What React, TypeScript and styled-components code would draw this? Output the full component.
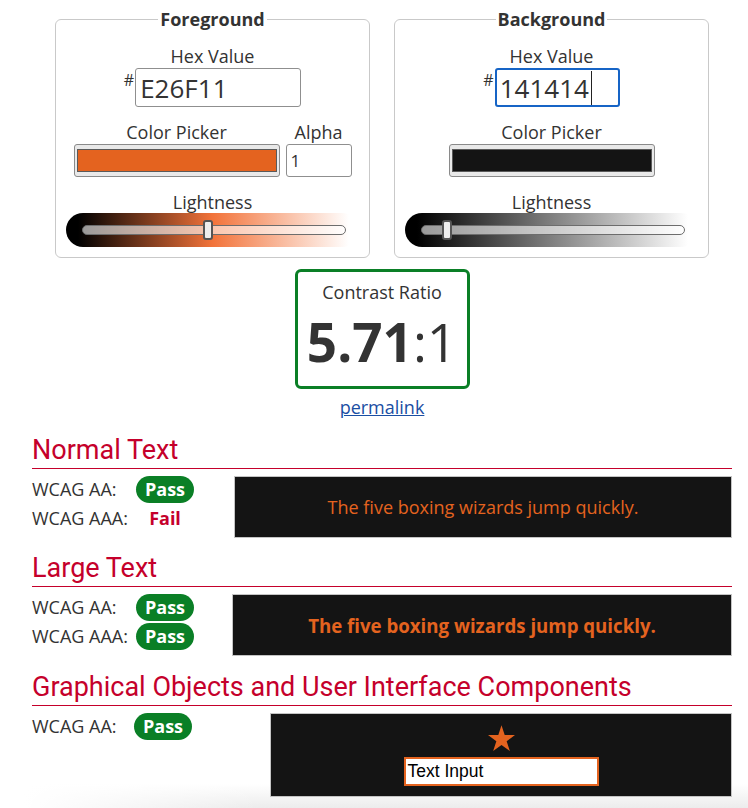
import React from "react";
import styled, { createGlobalStyle, css } from "styled-components";

const FG = "#e4631f";
const BG = "#141414";
const RED = "#c5002b";
const GREEN = "#0a7f26";

const GlobalStyle = createGlobalStyle`
  html, body { margin: 0; padding: 0; background: #fff; }
  body {
    font-family: "Open Sans", "DejaVu Sans", sans-serif;
    color: #333;
  }
  * { box-sizing: border-box; }
`;

const Page = styled.div`
  min-height: 808px;
  padding: 0 16px 0 32px;
  overflow: hidden;
  background:
    linear-gradient(to right, #fff 24px, rgba(255, 255, 255, 0) 260px),
    linear-gradient(to bottom, #fff 784px, #ececec 808px);
`;

const Content = styled.main`
  width: 700px;
`;

const Pickers = styled.div`
  display: flex;
  justify-content: center;
  gap: 24px;
  padding-top: 7px;
`;

const Panel = styled.fieldset`
  width: 315px;
  min-width: 0;
  margin: 0;
  padding: 13px 0 10px;
  border: 1px solid #c9c9c9;
  border-radius: 6px;
  display: flex;
  flex-direction: column;
  align-items: center;
`;

const Legend = styled.legend`
  margin: 0 auto;
  padding: 0 2px;
  font-size: 18px;
  line-height: 24px;
  font-weight: 700;
  color: #333;
`;

const FieldLabel = styled.div<{ $h?: number }>`
  font-size: 18px;
  line-height: ${(p) => p.$h ?? 24}px;
  text-align: center;
  color: #333;
`;

const HexRow = styled.div`
  display: flex;
  align-items: flex-start;
`;

const Hash = styled.span`
  font-size: 16px;
  line-height: 16px;
  margin-top: 4px;
  margin-right: 1px;
`;

const HexBox = styled.div<{ $w: number; $focused?: boolean }>`
  width: ${(p) => p.$w}px;
  height: 39px;
  display: flex;
  align-items: center;
  padding: 0 4px;
  font-size: 26px;
  color: #333;
  border-radius: 3px;
  ${(p) =>
    p.$focused
      ? css`
          border: 2px solid #1664c6;
          padding: 0 3px;
        `
      : css`
          border: 1px solid #8f8f8f;
        `}
`;

const Caret = styled.span`
  display: inline-block;
  width: 1px;
  height: 34px;
  margin-left: 2px;
  background: #222;
`;

const PickerRow = styled.div`
  display: flex;
  gap: 6px;
  margin-top: 13px;
`;

const PickerCol = styled.div`
  display: flex;
  flex-direction: column;
  align-items: center;
`;

const Swatch = styled.div`
  width: 206px;
  height: 33px;
  padding: 4px 2px;
  border: 1px solid #8a8a8a;
  border-radius: 3px;
  background: #e9e9e9;
`;

const SwatchFill = styled.div<{ $color: string }>`
  height: 100%;
  background: ${(p) => p.$color};
  border: 1px solid #5a5a5a;
`;

const AlphaBox = styled.div`
  width: 66px;
  height: 33px;
  display: flex;
  align-items: center;
  padding: 0 4px;
  font-size: 17px;
  color: #333;
  border: 1px solid #8f8f8f;
  border-radius: 3px;
`;

const LightnessBlock = styled.div`
  margin-top: 13px;
  display: flex;
  flex-direction: column;
  align-items: center;
`;

const SliderLabel = styled(FieldLabel)`
  padding-top: 1px;
`;

const SliderWell = styled.div<{ $mid: string }>`
  width: 293px;
  height: 34px;
  border-radius: 17px;
  display: flex;
  align-items: center;
  padding: 0 13px 0 16px;
  background: linear-gradient(
    to right,
    #000 12px,
    ${(p) => p.$mid} 50%,
    #fff calc(100% - 10px)
  );
`;

const Track = styled.div`
  position: relative;
  flex: 1;
  height: 10px;
  border-radius: 5px;
  border: 1px solid #6d6d6d;
  background: rgba(255, 255, 255, 0.6);
`;

const Thumb = styled.div`
  position: absolute;
  top: 50%;
  width: 10px;
  height: 20px;
  transform: translateY(-50%);
  background: #eee;
  border: 2px solid #555;
  border-radius: 3px;
`;

const Center = styled.div`
  display: flex;
  flex-direction: column;
  align-items: center;
`;

const RatioBox = styled.div`
  margin-top: 11px;
  width: 175px;
  height: 120px;
  border: 3px solid ${GREEN};
  border-radius: 6px;
  padding-top: 8px;
  text-align: center;
`;

const RatioLabel = styled.div`
  font-size: 18px;
  line-height: 24px;
  color: #333;
`;

const RatioValue = styled.div`
  margin-top: 11px;
  font-size: 53px;
  line-height: 53px;
  color: #333;
  white-space: nowrap;
  strong {
    font-weight: 700;
  }
`;

const Permalink = styled.a`
  margin-top: 6px;
  font-size: 18px;
  line-height: 24px;
  color: #1a4ea3;
  text-decoration: underline;
`;

const Section = styled.section<{ $top: number }>`
  margin-top: ${(p) => p.$top}px;
`;

const Heading = styled.h2`
  margin: 0;
  padding-bottom: 4px;
  font-family: Roboto, "Liberation Sans", sans-serif;
  font-weight: 400;
  font-size: 27px;
  line-height: 28px;
  color: ${RED};
  border-bottom: 1px solid ${RED};
`;

const Results = styled.div<{ $gap: number }>`
  display: flex;
  align-items: flex-start;
  gap: ${(p) => p.$gap}px;
  margin-top: 7px;
`;

const Checks = styled.div<{ $labelW: number }>`
  display: grid;
  grid-template-columns: ${(p) => p.$labelW}px 58px;
  row-gap: 2px;
`;

const CheckLabel = styled.div`
  font-size: 18px;
  line-height: 27px;
  color: #333;
  white-space: nowrap;
`;

const PassBadge = styled.div`
  height: 27px;
  border-radius: 14px;
  background: ${GREEN};
  color: #fff;
  font-weight: 700;
  font-size: 18px;
  line-height: 27px;
  text-align: center;
`;

const FailText = styled.div`
  color: ${RED};
  font-weight: 700;
  font-size: 18px;
  line-height: 27px;
  text-align: center;
`;

const Sample = styled.div<{ $large?: boolean }>`
  flex: 1;
  height: 62px;
  display: flex;
  align-items: center;
  justify-content: center;
  background: ${BG};
  border: 1px solid #c4c4c4;
  color: ${FG};
  font-size: ${(p) => (p.$large ? "18.66px" : "18px")};
  font-weight: ${(p) => (p.$large ? 700 : 400)};
`;

const GraphicSample = styled.div`
  flex: 1;
  height: 84px;
  display: flex;
  flex-direction: column;
  align-items: center;
  padding-top: 11px;
  gap: 5px;
  background: ${BG};
  border: 1px solid #c4c4c4;
`;

const FakeTextInput = styled.div`
  width: 195px;
  height: 29px;
  display: flex;
  align-items: center;
  padding: 0 2px;
  background: #fff;
  border: 2px solid ${FG};
  font-family: "Liberation Sans", Arial, sans-serif;
  font-size: 17.5px;
  color: #000;
`;

const Star = () => (
  <svg width="27" height="27" viewBox="0 0 27 27" aria-hidden="true">
    <polygon
      fill={FG}
      points="13.5,0.3 16.69,10.12 27,10.11 18.65,16.17 21.85,25.99 13.5,19.92 5.15,25.99 8.35,16.17 0,10.11 10.31,10.12"
    />
  </svg>
);

type SliderProps = { mid: string; pct: number };
const Lightness = ({ mid, pct }: SliderProps) => (
  <LightnessBlock>
    <SliderLabel $h={22}>Lightness</SliderLabel>
    <SliderWell $mid={mid}>
      <Track>
        <Thumb style={{ left: `calc(${pct} * (100% - 10px))` }} />
      </Track>
    </SliderWell>
  </LightnessBlock>
);

type Check = { label: string; pass: boolean };
const CheckList = ({ items, labelW }: { items: Check[]; labelW: number }) => (
  <Checks $labelW={labelW}>
    {items.map((c) => (
      <React.Fragment key={c.label}>
        <CheckLabel>{c.label}</CheckLabel>
        {c.pass ? <PassBadge>Pass</PassBadge> : <FailText>Fail</FailText>}
      </React.Fragment>
    ))}
  </Checks>
);

export default function App() {
  const sentence = "The five boxing wizards jump quickly.";
  return (
    <>
      <GlobalStyle />
      <Page>
        <Content>
          <Pickers>
            <Panel>
              <Legend>Foreground</Legend>
              <FieldLabel>Hex Value</FieldLabel>
              <HexRow>
                <Hash>#</Hash>
                <HexBox $w={166}>E26F11</HexBox>
              </HexRow>
              <PickerRow>
                <PickerCol>
                  <FieldLabel>Color Picker</FieldLabel>
                  <Swatch>
                    <SwatchFill $color={FG} />
                  </Swatch>
                </PickerCol>
                <PickerCol>
                  <FieldLabel>Alpha</FieldLabel>
                  <AlphaBox>1</AlphaBox>
                </PickerCol>
              </PickerRow>
              <Lightness mid="#f2733a" pct={0.476} />
            </Panel>
            <Panel>
              <Legend>Background</Legend>
              <FieldLabel>Hex Value</FieldLabel>
              <HexRow>
                <Hash>#</Hash>
                <HexBox $w={125} $focused>
                  141414
                  <Caret />
                </HexBox>
              </HexRow>
              <PickerRow>
                <PickerCol>
                  <FieldLabel>Color Picker</FieldLabel>
                  <Swatch>
                    <SwatchFill $color={BG} />
                  </Swatch>
                </PickerCol>
              </PickerRow>
              <Lightness mid="hsl(0, 0%, 50%)" pct={0.078} />
            </Panel>
          </Pickers>

          <Center>
            <RatioBox>
              <RatioLabel>Contrast Ratio</RatioLabel>
              <RatioValue>
                <strong>5.71</strong>:1
              </RatioValue>
            </RatioBox>
            <Permalink href="#">permalink</Permalink>
          </Center>

          <Section $top={17}>
            <Heading>Normal Text</Heading>
            <Results $gap={40}>
              <CheckList
                labelW={104}
                items={[
                  { label: "WCAG AA:", pass: true },
                  { label: "WCAG AAA:", pass: false },
                ]}
              />
              <Sample>{sentence}</Sample>
            </Results>
          </Section>

          <Section $top={16}>
            <Heading>Large Text</Heading>
            <Results $gap={38}>
              <CheckList
                labelW={104}
                items={[
                  { label: "WCAG AA:", pass: true },
                  { label: "WCAG AAA:", pass: true },
                ]}
              />
              <Sample $large>{sentence}</Sample>
            </Results>
          </Section>

          <Section $top={17}>
            <Heading>Graphical Objects and User Interface Components</Heading>
            <Results $gap={78}>
              <CheckList labelW={102} items={[{ label: "WCAG AA:", pass: true }]} />
              <GraphicSample>
                <Star />
                <FakeTextInput>Text Input</FakeTextInput>
              </GraphicSample>
            </Results>
          </Section>
        </Content>
      </Page>
    </>
  );
}
